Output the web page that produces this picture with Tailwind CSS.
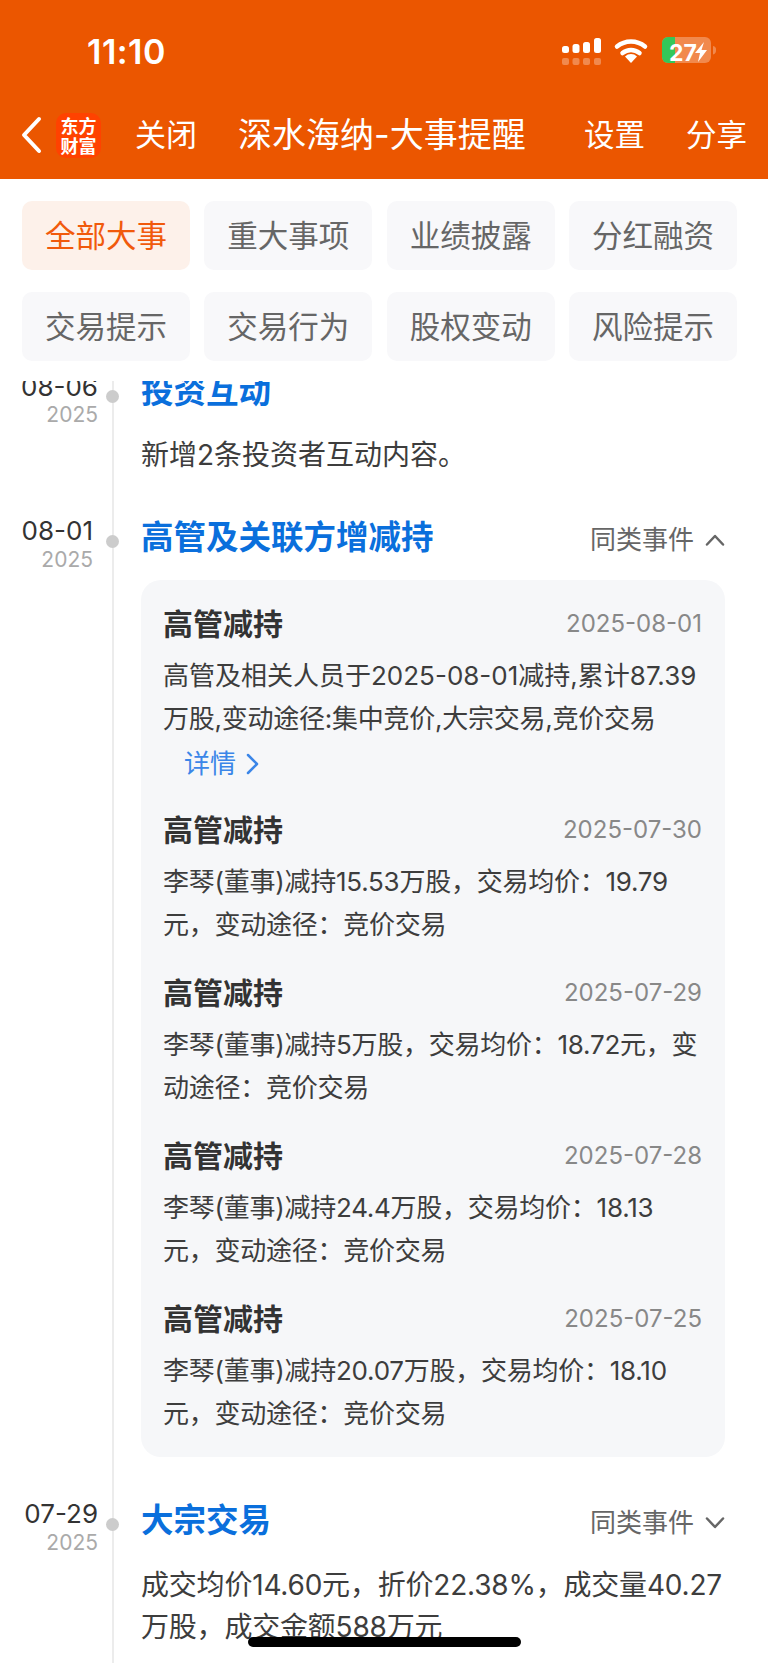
<!doctype html>
<html>

<head>
    <meta charset="UTF-8">
    <meta name="viewport" content="width=device-width, initial-scale=1.0">
    <script src="https://cdn.jsdelivr.net/npm/@tailwindcss/browser@4"></script>
    <title>深水海纳-大事提醒</title>
</head>

<body class="bg-white font-['Inter','Noto_Sans_CJK_SC',sans-serif]">
    <div class="w-[768px] h-[1663px] flex flex-col overflow-hidden relative">

        <!-- status bar + nav -->
        <div class="h-[179px] bg-[#eb5600] text-white shrink-0 flex flex-col">
            <div class="h-[113px] flex items-start justify-between">
                <div class="ml-[87px] mt-[31px] text-[34px] leading-[42px] font-semibold tracking-[0.5px]">11:10</div>
                <svg class="mr-[50px] mt-[20px]" width="156" height="60" viewBox="562 20 156 60">
                    <rect x="562" y="46" width="7" height="7" rx="2.5" fill="#fff" />
                    <rect x="572.5" y="44" width="7" height="9" rx="2.5" fill="#fff" />
                    <rect x="583" y="42" width="7" height="11" rx="2.5" fill="#fff" />
                    <rect x="594" y="38" width="7" height="15" rx="2.5" fill="#fff" />
                    <rect x="562" y="58" width="7" height="7" rx="2" fill="#fff" opacity=".3" />
                    <rect x="572.5" y="58" width="7" height="7" rx="2" fill="#fff" opacity=".3" />
                    <rect x="583" y="58" width="7" height="7" rx="2" fill="#fff" opacity=".3" />
                    <rect x="594" y="58" width="7" height="7" rx="2" fill="#fff" opacity=".3" />
                    <path d="M617 46.5a22 22 0 0 1 28 0M622.500 53a13.500 13.500 0 0 1 17 0" fill="none" stroke="#fff" stroke-width="4.500" stroke-linecap="round" />
                    <path d="M631 63l-6-6.500a8.500 8.500 0 0 1 12 0z" fill="#fff" />
                    <path d="M668 37h37a6 6 0 0 1 6 6v14a6 6 0 0 1-6 6h-37a6 6 0 0 1-6-6V43a6 6 0 0 1 6-6z" fill="#fff" opacity=".3" />
                    <path d="M668 37h7v26h-7a6 6 0 0 1-6-6V43a6 6 0 0 1 6-6z" fill="#34c759" />
                    <path d="M713 46a4 4 0 0 1 3 4.500a4 4 0 0 1-3 4z" fill="#fff" opacity=".3" />
                    <text x="669" y="60.500" font-size="23" font-weight="700" font-family="Inter" fill="#fff">27</text>
                    <path d="M704 42l-9 11h5l-2 9 9-12h-5.500z" fill="#fff" />
                </svg>
            </div>
            <div class="flex items-center h-[46px] mt-[-1px]">
                <svg class="ml-[20px]" width="22" height="38" viewBox="0 0 22 38">
                    <path d="M19 3L4 19l15 16" fill="none" stroke="#fff" stroke-width="4" stroke-linecap="round" stroke-linejoin="round" />
                </svg>
                <div class="ml-[14px] w-[45px] h-[45px] shrink-0 rounded-[10px] bg-[#ff4200] flex items-center justify-center text-center text-[18px] leading-[20px] font-semibold font-['Noto_Sans_CJK_SC',sans-serif]">东方<br>财富</div>
                <div class="ml-[34px] w-[103px] text-[31px] leading-[46px]">关闭</div>
                <div class="text-[34px] leading-[46px] whitespace-nowrap">深水海纳-大事提醒</div>
                <div class="ml-auto text-[30.500px] leading-[46px]">设置</div>
                <div class="ml-[41px] mr-[21px] text-[30.500px] leading-[46px]">分享</div>
            </div>
        </div>

        <!-- tabs -->
        <div class="grid grid-cols-4 gap-x-[14.6px] gap-y-[22px] pt-[22px] pl-[22px] pr-[31px] pb-[20px] shrink-0 text-[30.500px] text-[#666]">
            <div class="h-[69px] rounded-[10px] bg-[#fdf1ea] text-[#f15a0c] flex items-center justify-center">全部大事</div>
            <div class="h-[69px] rounded-[10px] bg-[#f8f8fa] flex items-center justify-center">重大事项</div>
            <div class="h-[69px] rounded-[10px] bg-[#f8f8fa] flex items-center justify-center">业绩披露</div>
            <div class="h-[69px] rounded-[10px] bg-[#f8f8fa] flex items-center justify-center">分红融资</div>
            <div class="h-[69px] rounded-[10px] bg-[#f8f8fa] flex items-center justify-center">交易提示</div>
            <div class="h-[69px] rounded-[10px] bg-[#f8f8fa] flex items-center justify-center">交易行为</div>
            <div class="h-[69px] rounded-[10px] bg-[#f8f8fa] flex items-center justify-center">股权变动</div>
            <div class="h-[69px] rounded-[10px] bg-[#f8f8fa] flex items-center justify-center">风险提示</div>
        </div>

        <!-- timeline -->
        <div class="relative flex-1 overflow-hidden">
            <div class="absolute left-[112px] top-0 bottom-0 w-[2px] bg-[#ececec]"></div>

            <div class="relative flex mt-[-11px]">
                <div class="w-[98px] shrink-0 pt-[2px] flex flex-col items-end">
                    <div class="text-[26px] leading-[30px] text-[#333]">08-06</div>
                    <div class="text-[21px] leading-[26px] text-[#aaa]">2025</div>
                </div>
                <div class="w-[43px] shrink-0"><div class="ml-[7.500px] mt-[20px] w-[13px] h-[13px] rounded-full bg-[#cccccc]"></div></div>
                <div class="w-[584px]">
                    <div class="text-[32.500px] leading-[44px] font-bold text-[#0a6fdc]">投资互动</div>
                    <div class="mt-[19px] text-[28px] leading-[44px] text-[#3d3d3d]">新增2条投资者互动内容。</div>
                </div>
            </div>

            <div class="relative flex mt-[39px]">
                <div class="w-[93px] mr-[5px] shrink-0 flex flex-col items-end">
                    <div class="text-[26px] leading-[30px] text-[#333]">08-01</div>
                    <div class="text-[21px] leading-[27px] text-[#aaa]">2025</div>
                </div>
                <div class="w-[43px] shrink-0"><div class="ml-[7.500px] mt-[19px] w-[13px] h-[13px] rounded-full bg-[#cccccc]"></div></div>
                <div class="w-[584px]">
                    <div class="flex items-center justify-between h-[44px]">
                        <div class="text-[32.500px] leading-[44px] font-bold text-[#0a6fdc]">高管及关联方增减持</div>
                        <div class="flex items-center text-[26px] text-[#666] mt-[3px]">同类事件
                            <svg class="ml-[11px]" width="20" height="12" viewBox="0 0 20 12"><path d="M2 10.500L10 2l8 8.500" fill="none" stroke="#666" stroke-width="2.500" stroke-linecap="round" stroke-linejoin="round" /></svg>
                        </div>
                    </div>
                    <div class="mt-[20px] rounded-[20px] bg-[#f6f7f9] pt-[22px] pb-[22px] pl-[22px] pr-[23px] flex flex-col gap-y-[25px]">
                        <div>
                            <div class="flex items-center justify-between h-[44px]">
                                <div class="text-[30px] font-semibold text-[#333]">高管减持</div>
                                <div class="text-[24px] text-[#888]">2025-08-01</div>
                            </div>
                            <div class="mt-[8px] text-[26px] leading-[43px] text-[#3d3d3d] whitespace-nowrap"><span>高管及相关人员于2025-08-01减持,累计87.39</span><br><span class="tracking-[-0.25px]">万股,变动途径:集中竞价,大宗交易,竞价交易</span><span class="flex items-center mt-[2px] mb-[-2px] ml-[21px] text-[#3b86e8]">详情<svg class="ml-[10px]" width="13" height="22" viewBox="0 0 13 22"><path d="M2 2l9 9-9 9" fill="none" stroke="#3b86e8" stroke-width="2.500" stroke-linecap="round" stroke-linejoin="round" /></svg></span></div>
                        </div>
                        <div>
                            <div class="flex items-center justify-between h-[44px]">
                                <div class="text-[30px] font-semibold text-[#333]">高管减持</div>
                                <div class="text-[24px] text-[#888]">2025-07-30</div>
                            </div>
                            <div class="mt-[8px] text-[26px] leading-[43px] text-[#3d3d3d] whitespace-nowrap tracking-[-0.25px]">李琴(董事)减持15.53万股，交易均价：19.79<br>元，变动途径：竞价交易</div>
                        </div>
                        <div>
                            <div class="flex items-center justify-between h-[44px]">
                                <div class="text-[30px] font-semibold text-[#333]">高管减持</div>
                                <div class="text-[24px] text-[#888]">2025-07-29</div>
                            </div>
                            <div class="mt-[8px] text-[26px] leading-[43px] text-[#3d3d3d] whitespace-nowrap tracking-[-0.25px]">李琴(董事)减持5万股，交易均价：18.72元，变<br>动途径：竞价交易</div>
                        </div>
                        <div>
                            <div class="flex items-center justify-between h-[44px]">
                                <div class="text-[30px] font-semibold text-[#333]">高管减持</div>
                                <div class="text-[24px] text-[#888]">2025-07-28</div>
                            </div>
                            <div class="mt-[8px] text-[26px] leading-[43px] text-[#3d3d3d] whitespace-nowrap tracking-[-0.25px]">李琴(董事)减持24.4万股，交易均价：18.13<br>元，变动途径：竞价交易</div>
                        </div>
                        <div>
                            <div class="flex items-center justify-between h-[44px]">
                                <div class="text-[30px] font-semibold text-[#333]">高管减持</div>
                                <div class="text-[24px] text-[#888]">2025-07-25</div>
                            </div>
                            <div class="mt-[8px] text-[26px] leading-[43px] text-[#3d3d3d] whitespace-nowrap tracking-[-0.25px]">李琴(董事)减持20.07万股，交易均价：18.10<br>元，变动途径：竞价交易</div>
                        </div>
                    </div>
                </div>
            </div>

            <div class="relative flex mt-[42px]">
                <div class="w-[98px] shrink-0 flex flex-col items-end">
                    <div class="text-[26px] leading-[30px] text-[#333]">07-29</div>
                    <div class="text-[21px] leading-[27px] text-[#aaa]">2025</div>
                </div>
                <div class="w-[43px] shrink-0"><div class="ml-[7.500px] mt-[19px] w-[13px] h-[13px] rounded-full bg-[#cccccc]"></div></div>
                <div class="w-[584px]">
                    <div class="flex items-center justify-between h-[44px]">
                        <div class="text-[32.500px] leading-[44px] font-bold text-[#0a6fdc]">大宗交易</div>
                        <div class="flex items-center text-[26px] text-[#666] mt-[3px]">同类事件
                            <svg class="ml-[11px]" width="20" height="12" viewBox="0 0 20 12"><path d="M2 1.500L10 10l8-8.500" fill="none" stroke="#666" stroke-width="2.500" stroke-linecap="round" stroke-linejoin="round" /></svg>
                        </div>
                    </div>
                    <div class="mt-[21px] text-[28px] leading-[42px] text-[#3d3d3d] whitespace-nowrap tracking-[-0.2px]">成交均价14.60元，折价22.38%，成交量40.27<br>万股，成交金额588万元</div>
                </div>
            </div>
        </div>

        <!-- home indicator -->
        <div class="absolute left-[248px] top-[1637px] w-[273px] h-[10px] rounded-full bg-black"></div>
    </div>
</body>

</html>
